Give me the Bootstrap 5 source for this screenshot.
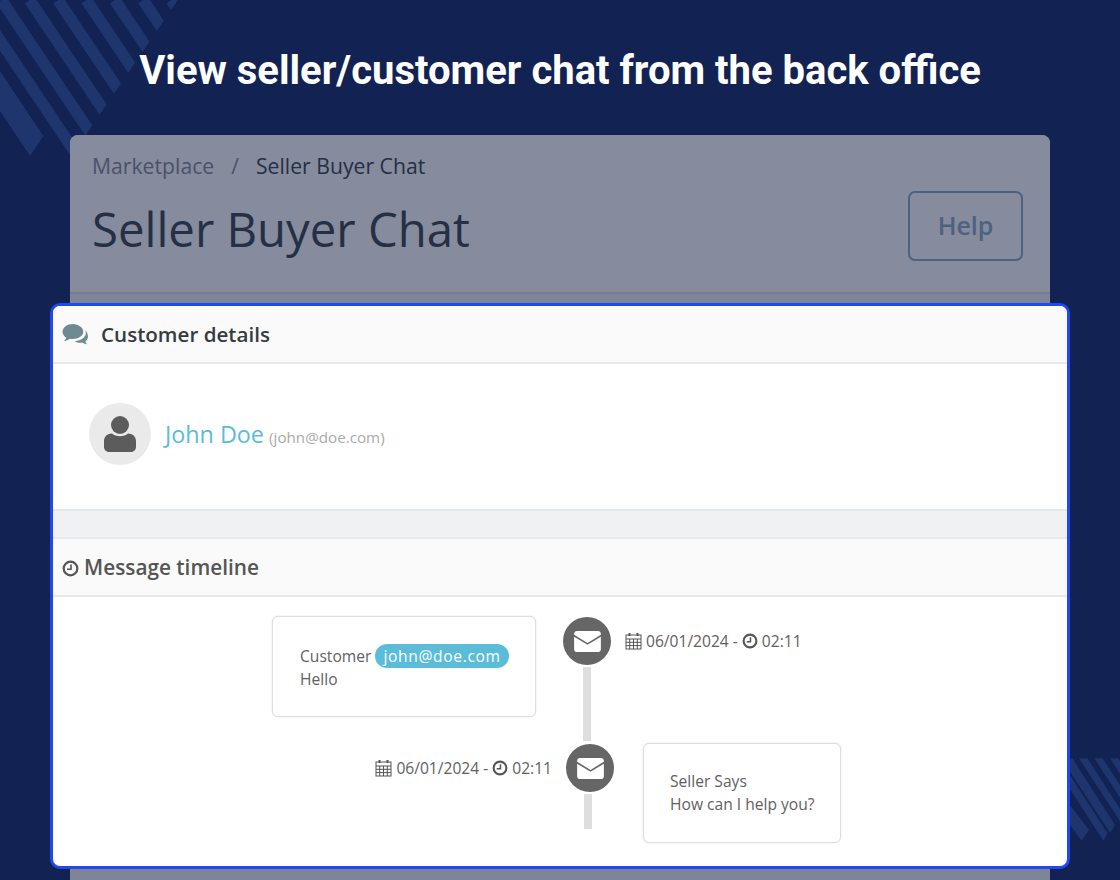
<!DOCTYPE html>
<html lang="en">
<head>
    <meta charset="UTF-8">
    <title>Seller Buyer Chat</title>
    <link href="https://cdn.jsdelivr.net/npm/bootstrap@5.3.0/dist/css/bootstrap.min.css" rel="stylesheet">
    <style>
        body {
            background-color: #112253;
            font-family: "Open Sans", sans-serif;
            color: #555;
            height: 880px;
            overflow: hidden;
        }

        .stripes-top { position: absolute; left: 0; top: 0; width: 280px; height: 180px; }
        .stripes-bottom { position: absolute; left: 1060px; top: 750px; width: 60px; height: 100px; }

        .slide-title {
            font-family: Roboto, sans-serif;
            font-weight: 700;
            font-size: 40px;
            line-height: 46px;
            color: #fff;
            text-align: center;
            margin: 0;
            padding-top: 48px;
            height: 135px;
            position: relative;
        }

        .back-panel {
            position: relative;
            margin: 0 70px;
            height: 745px;
            background-color: #7f8598;
            border-radius: 8px 8px 0 0;
        }

        .back-head {
            height: 159px;
            padding: 16px 27px 0 22px;
            background-color: #868b9e;
            border-bottom: 2px solid #777d91;
            border-radius: 8px 8px 0 0;
        }

        .crumbs { font-size: 21.2px; line-height: 30px; color: #252f45; }
        .crumbs .crumb-link { color: #4a5269; }
        .crumbs .crumb-sep { color: #4a5269; padding: 0 17px; }

        .back-title { font-size: 47.300px; line-height: 62px; color: #252f45; margin: 17px 0 0; font-weight: 400; }

        .help-btn {
            width: 115px;
            height: 70px;
            border: 2px solid #4d6280;
            border-radius: 7px;
            color: #4d6280;
            font-size: 25px;
            font-weight: 600;
            background: transparent;
            margin-top: 10px;
        }

        .front-panel {
            position: absolute;
            left: -20px;
            right: -20px;
            top: 168px;
            height: 566px;
            background-color: #fff;
            border: 3px solid #2148f0;
            border-radius: 10px;
            overflow: hidden;
        }

        .sect-head {
            background-color: #fafafa;
            border-bottom: 2px solid #e6eaed;
            font-weight: 600;
            display: flex;
            align-items: center;
        }

        .sect-head-customer { height: 58px; padding-left: 9px; color: #363a41; gap: 12px; font-size: 20.6px; }
        .sect-head-timeline { height: 60px; padding: 2px 0 0 9px; color: #555; gap: 5px; border-top: 2px solid #e6eaed; font-size: 20.8px; }

        .customer-body {
            height: 147px;
            padding: 39px 36px 0;
            border-bottom: 2px solid #e3e8ea;
            gap: 14px;
        }

        .avatar-round {
            width: 62px;
            height: 62px;
            border-radius: 50%;
            background-color: #eaeaea;
        }

        .cust-line { padding-top: 14px; }
        .cust-name { font-size: 23.3px; color: #5bbcd9; }
        .cust-mail { font-size: 15.2px; color: #aaa; margin-left: 1px; }

        .gap-strip { height: 26px; background-color: #eff1f2; }

        .tl-wrap { padding-top: 19px; font-size: 15.6px; }
        .tl-one { height: 127px; padding-left: 219px; }
        .tl-two { height: 100px; }

        .msg-box {
            background: #fff;
            border: 1px solid #dedede;
            box-shadow: 0 0 2px rgba(0, 0, 0, .12);
            border-radius: 6px;
            line-height: 23px;
            display: flex;
            flex-direction: column;
            justify-content: center;
            color: #616161;
            white-space: nowrap;
        }

        .msg-box-left { width: 264px; height: 101px; padding: 2px 0 0 27px; }
        .msg-box-right { width: 198px; height: 100px; padding-left: 26px; margin-left: 29px; }

        .mail-pill {
            background-color: #5bbcd9;
            color: #fff;
            border-radius: 12px;
            padding: 1px 8px;
            letter-spacing: .65px;
        }

        .mail-dot {
            width: 48px;
            height: 48px;
            border-radius: 50%;
            background-color: #666;
            display: flex;
            align-items: center;
            justify-content: center;
            flex: none;
        }

        .tl-col { display: flex; flex-direction: column; align-items: center; width: 48px; margin-top: 1px; }
        .tl-col-a { margin-left: 27px; }
        .stem { width: 8px; background-color: #dedede; margin-top: 2px; }
        .stem-a { height: 74px; }
        .stem-b { height: 35px; margin-right: 5px; }

        .stamp { display: flex; align-items: center; gap: 4px; color: #616161; white-space: nowrap; line-height: 20px; padding-top: 15px; }
        .stamp-a { margin-left: 14px; }
        .stamp-b { width: 499px; margin-right: 14px; justify-content: flex-end; }
    </style>
</head>
<body>

    <!-- stripes behind everything -->
    <svg class="stripes-top" viewBox="0 0 840 540">
        <defs>
            <clipPath id="stripeCut"><polygon points="0,0 534,0 0,782"></polygon></clipPath>
        </defs>
        <g clip-path="url(#stripeCut)" stroke="#1f356e" stroke-width="35" fill="none">
            <line x1="514" y1="0" x2="1050" y2="800"></line>
            <line x1="429" y1="0" x2="965" y2="800"></line>
            <line x1="344" y1="0" x2="880" y2="800"></line>
            <line x1="259" y1="0" x2="795" y2="800"></line>
            <line x1="174" y1="0" x2="710" y2="800"></line>
            <line x1="89" y1="0" x2="625" y2="800"></line>
            <line x1="4" y1="0" x2="540" y2="800"></line>
            <line x1="-81" y1="0" x2="455" y2="800"></line>
        </g>
        <polygon points="0,213 130,408 90,468 0,333" fill="#1f356e"></polygon>
    </svg>
    <svg class="stripes-bottom" viewBox="0 0 180 300" fill="#1f356e">
        <polygon points="30,25 37,25 165,225 150,248 30,65"></polygon>
        <polygon points="30,76 143,250 130,272 30,118"></polygon>
        <polygon points="30,165 87,240 65,272 30,225"></polygon>
        <polygon points="57,25 82,25 180,176 180,214"></polygon>
        <polygon points="103,25 128,25 180,105 180,143"></polygon>
        <polygon points="150,25 175,25 180,33 180,71"></polygon>
    </svg>

    <h1 class="slide-title">View seller/customer chat from the back office</h1>

    <div class="back-panel">
        <div class="back-head">
            <div class="crumbs"><span class="crumb-link">Marketplace</span><span class="crumb-sep">/</span>Seller Buyer Chat</div>
            <div class="d-flex justify-content-between align-items-start">
                <h2 class="back-title">Seller Buyer Chat</h2>
                <button type="button" class="btn help-btn">Help</button>
            </div>
        </div>

        <div class="front-panel">
            <div class="sect-head sect-head-customer">
                <svg width="27" height="23" viewBox="0 0 26 22" fill="#6f8a93">
                    <path d="M10.500 1C5 1 .5 4.300.5 8.400c0 2.300 1.400 4.300 3.600 5.700-.4 1.300-1.200 2.300-2.400 3.200 2.300-.2 4.500-1 6-2.200.9.200 1.800.300 2.800.300 5.500 0 10-3.300 10-7S16 1 10.500 1z"></path>
                    <path d="M22.300 6.500c.5 1 .7 1.900.7 2.900 0 4.400-4.700 7.800-10.600 8 1.400 1 3.200 1.500 5.100 1.500.7 0 1.400-.1 2.100-.2 1.300.9 2.900 1.500 4.700 1.700-.8-.7-1.500-1.600-1.800-2.700 1.600-1.100 2.500-2.700 2.500-4.500 0-2.600-1.100-5-2.700-6.700z"></path>
                </svg>
                <span>Customer details</span>
            </div>
            <div class="customer-body d-flex align-items-start">
                <div class="avatar-round d-flex align-items-center justify-content-center">
                    <svg width="34" height="38" viewBox="0 0 34 38" fill="#5c5c5c">
                        <circle cx="17" cy="10" r="9"></circle>
                        <path d="M9 18.500c2 1.800 4.800 2.700 8 2.700s6-.9 8-2.700c4.500 0 8 3 8 7.500v6c0 2.500-2 5-5 5H6c-3 0-5-2.500-5-5v-6c0-4.500 3.500-7.500 8-7.500z"></path>
                    </svg>
                </div>
                <div class="cust-line"><span class="cust-name">John Doe</span> <span class="cust-mail">(john@doe.com)</span></div>
            </div>
            <div class="gap-strip"></div>
            <div class="sect-head sect-head-timeline">
                <svg width="17" height="17" viewBox="0 0 17 17" fill="none" stroke="#555" stroke-width="2.200">
                    <circle cx="8.500" cy="8.500" r="6.800"></circle>
                    <path d="M9 4.500v4.700H5" stroke-width="1.600"></path>
                </svg>
                <span>Message timeline</span>
            </div>

            <div class="tl-wrap">
                <div class="d-flex tl-one align-items-start">
                    <div class="msg-box msg-box-left">
                        <div>Customer <span class="mail-pill">john@doe.com</span></div>
                        <div>Hello</div>
                    </div>
                    <div class="tl-col tl-col-a">
                        <div class="mail-dot">
                            <svg width="27" height="21" viewBox="0 0 28 22" fill="#fff">
                                <path d="M3 0h22c1.700 0 3 1.300 3 3v.8L14 12.500 0 3.800V3c0-1.700 1.300-3 3-3z"></path>
                                <path d="M0 6l14 8.500L28 6v13c0 1.700-1.300 3-3 3H3c-1.700 0-3-1.300-3-3z"></path>
                            </svg>
                        </div>
                        <div class="stem stem-a"></div>
                    </div>
                    <div class="stamp stamp-a">
                        <svg width="17" height="18" viewBox="0 0 17 18" fill="none" stroke="#555">
                            <rect x="1" y="3" width="15" height="14"></rect>
                            <path d="M1 7h15M1 10.300h15M1 13.600h15M4.700 7v10M8.500 7v10M12.300 7v10"></path>
                            <path d="M4.500 1v3M12.500 1v3" stroke-width="2"></path>
                        </svg>
                        <span>06/01/2024 -</span>
                        <svg width="16" height="16" viewBox="0 0 17 17" fill="none" stroke="#555" stroke-width="2.200">
                            <circle cx="8.500" cy="8.500" r="6.800"></circle>
                            <path d="M9 4.500v4.700H5" stroke-width="1.600"></path>
                        </svg>
                        <span>02:11</span>
                    </div>
                </div>
                <div class="d-flex tl-two align-items-start">
                    <div class="stamp stamp-b">
                        <svg width="17" height="18" viewBox="0 0 17 18" fill="none" stroke="#555">
                            <rect x="1" y="3" width="15" height="14"></rect>
                            <path d="M1 7h15M1 10.300h15M1 13.600h15M4.700 7v10M8.500 7v10M12.300 7v10"></path>
                            <path d="M4.500 1v3M12.500 1v3" stroke-width="2"></path>
                        </svg>
                        <span>06/01/2024 -</span>
                        <svg width="16" height="16" viewBox="0 0 17 17" fill="none" stroke="#555" stroke-width="2.200">
                            <circle cx="8.500" cy="8.500" r="6.800"></circle>
                            <path d="M9 4.500v4.700H5" stroke-width="1.600"></path>
                        </svg>
                        <span>02:11</span>
                    </div>
                    <div class="tl-col">
                        <div class="mail-dot">
                            <svg width="27" height="21" viewBox="0 0 28 22" fill="#fff">
                                <path d="M3 0h22c1.700 0 3 1.300 3 3v.8L14 12.500 0 3.800V3c0-1.700 1.300-3 3-3z"></path>
                                <path d="M0 6l14 8.500L28 6v13c0 1.700-1.300 3-3 3H3c-1.700 0-3-1.300-3-3z"></path>
                            </svg>
                        </div>
                        <div class="stem stem-b"></div>
                    </div>
                    <div class="msg-box msg-box-right">
                        <div>Seller Says</div>
                        <div>How can I help you?</div>
                    </div>
                </div>
            </div>
        </div>
    </div>

    <script src="https://cdn.jsdelivr.net/npm/bootstrap@5.3.0/dist/js/bootstrap.bundle.min.js"></script>
</body>
</html>
